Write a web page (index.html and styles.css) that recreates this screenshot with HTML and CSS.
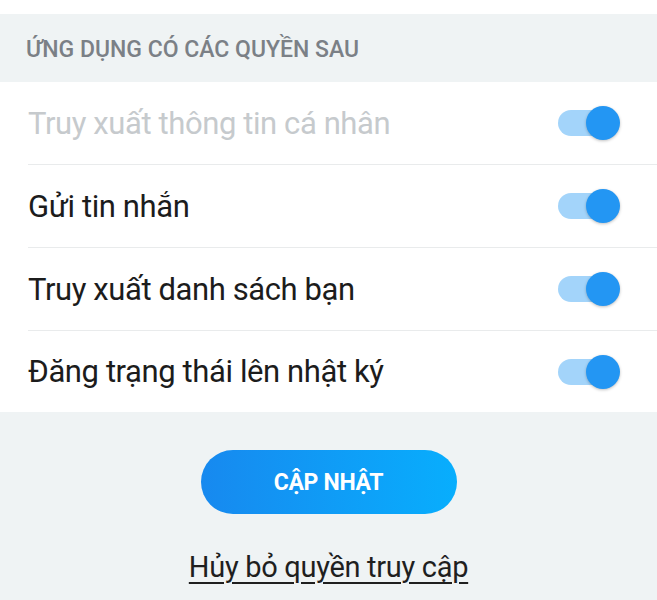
FILE: index.html
```html
<!DOCTYPE html>
<html lang="vi">
<head>
<meta charset="utf-8">
<link rel="stylesheet" href="styles.css">
</head>
<body>
<div class="page">
  <div class="top"></div>
  <div class="section-title">ỨNG DỤNG CÓ CÁC QUYỀN SAU</div>
  <div class="list">
    <div class="row disabled">
      <span class="label">Truy xuất thông tin cá nhân</span>
      <span class="toggle"><span class="knob"></span></span>
    </div>
    <div class="row">
      <span class="label">Gửi tin nhắn</span>
      <span class="toggle"><span class="knob"></span></span>
    </div>
    <div class="row">
      <span class="label">Truy xuất danh sách bạn</span>
      <span class="toggle"><span class="knob"></span></span>
    </div>
    <div class="row last">
      <span class="label">Đăng trạng thái lên nhật ký</span>
      <span class="toggle"><span class="knob"></span></span>
    </div>
  </div>
  <div class="actions">
    <button class="btn">CẬP NHẬT</button>
    <a class="revoke" href="#">Hủy bỏ quyền truy cập</a>
  </div>
</div>
</body>
</html>
```
FILE: styles.css
```css
* { box-sizing: border-box; }
html, body { margin: 0; padding: 0; }
body {
  width: 657px;
  height: 600px;
  overflow: hidden;
  background: #eff3f4;
  font-family: Roboto, "Noto Sans", sans-serif;
}
.top { height: 14px; background: #fff; }
.section-title {
  height: 68px;
  display: flex;
  align-items: center;
  padding-left: 26px;
  padding-top: 2px;
  font-size: 23px;
  font-weight: 500;
  color: #7b8086;
  letter-spacing: 0;
  background: #eff3f4;
}
.list { background: #fff; padding-left: 28px; }
.row {
  height: 83px;
  display: flex;
  align-items: center;
  justify-content: space-between;
  border-bottom: 1.5px solid #e9ebec;
  padding-right: 43px;
}
.row.last { border-bottom: none; height: 81px; }
.label {
  font-size: 31px;
  color: #1c1c1c;
  letter-spacing: -0.4px;
}
.row.disabled .label { color: #c6cacd; }
.toggle {
  position: relative;
  width: 56px;
  height: 26px;
  border-radius: 13px;
  background: #a3d4fa;
}
.knob {
  position: absolute;
  right: -6px;
  top: -4px;
  width: 34px;
  height: 34px;
  border-radius: 50%;
  background: #2396f3;
  box-shadow: 0 1px 3px rgba(0,0,0,0.25);
}
.actions {
  display: flex;
  flex-direction: column;
  align-items: center;
  padding-top: 38px;
}
.btn {
  width: 256px;
  height: 64px;
  border: none;
  border-radius: 32px;
  background: linear-gradient(90deg, #1789ef 0%, #08aefd 100%);
  color: #fff;
  font-family: Roboto, sans-serif;
  font-size: 23px;
  font-weight: 700;
  letter-spacing: -0.3px;
}
.revoke {
  margin-top: 36px;
  font-size: 29px;
  color: #1f1f1f;
  text-decoration: underline;
  text-decoration-thickness: 2px;
  text-underline-offset: 5px;
  letter-spacing: -0.3px;
}
```
